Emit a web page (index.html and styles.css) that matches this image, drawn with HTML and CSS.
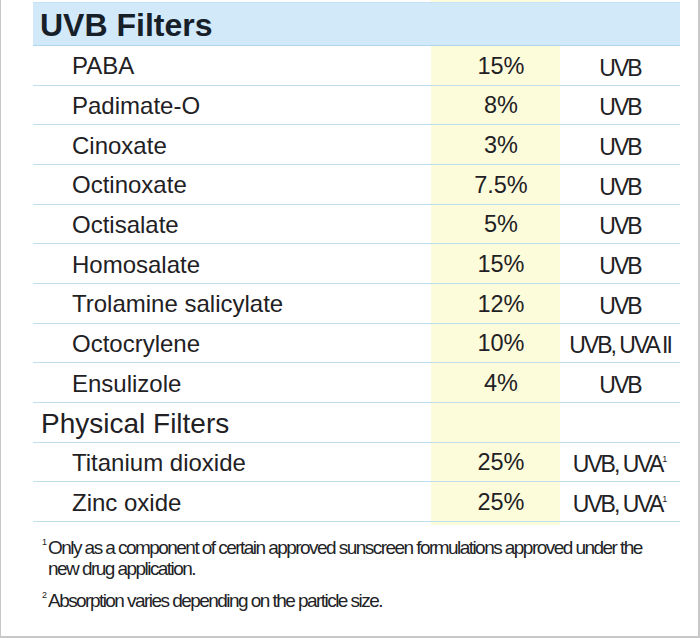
FILE: index.html
```html
<!DOCTYPE html>
<html lang="en">
<head>
<meta charset="utf-8">
<title>UVB Filters</title>
<link rel="stylesheet" href="styles.css">
</head>
<body>
<div class="page">
  <div class="table">
    <div class="row head"><div class="title">UVB Filters</div></div>
    <div class="row"><div class="name">PABA</div><div class="pct">15%</div><div class="uv">UVB</div></div>
    <div class="row"><div class="name">Padimate-O</div><div class="pct">8%</div><div class="uv">UVB</div></div>
    <div class="row"><div class="name">Cinoxate</div><div class="pct">3%</div><div class="uv">UVB</div></div>
    <div class="row"><div class="name">Octinoxate</div><div class="pct">7.5%</div><div class="uv">UVB</div></div>
    <div class="row"><div class="name">Octisalate</div><div class="pct">5%</div><div class="uv">UVB</div></div>
    <div class="row"><div class="name">Homosalate</div><div class="pct">15%</div><div class="uv">UVB</div></div>
    <div class="row"><div class="name">Trolamine salicylate</div><div class="pct">12%</div><div class="uv">UVB</div></div>
    <div class="row"><div class="name">Octocrylene</div><div class="pct">10%</div><div class="uv">UVB, UVA II</div></div>
    <div class="row"><div class="name">Ensulizole</div><div class="pct">4%</div><div class="uv">UVB</div></div>
    <div class="row group"><div class="title">Physical Filters</div></div>
    <div class="row"><div class="name">Titanium dioxide</div><div class="pct">25%</div><div class="uv">UVB, UVA<sup>1</sup></div></div>
    <div class="row"><div class="name">Zinc oxide</div><div class="pct">25%</div><div class="uv">UVB, UVA<sup>1</sup></div></div>
  </div>
  <div class="notes">
    <p><sup>1</sup>Only as a component of certain approved sunscreen formulations approved under the new drug application.</p>
    <p><sup>2</sup>Absorption varies depending on the particle size.</p>
  </div>
</div>
</body>
</html>
```
FILE: styles.css
```css
html, body {
  margin: 0;
  padding: 0;
  background: #ffffff;
}

body {
  font-family: "Liberation Sans", Arial, sans-serif;
  color: #1f2124;
}

.page {
  box-sizing: border-box;
  width: 700px;
  height: 638px;
  border-left: 1px solid #c8c8c8;
  border-right: 2px solid #c8c8c8;
  border-bottom: 2px solid #c8c8c8;
  padding-left: 32px;
  overflow: hidden;
}

.table {
  width: 647px;
  padding-top: 2px;
  padding-bottom: 3px;
  background: linear-gradient(to right,
    transparent 398px, #fcfcdb 398px, #fcfcdb 527px, transparent 527px);
}

.row {
  box-sizing: border-box;
  display: grid;
  grid-template-columns: 398px 129px 120px;
  align-items: center;
  height: 39.67px;
  border-bottom: 1px solid #bfdff1;
}

.row.head {
  height: 44px;
  background: #d1e9f9;
  border-top: 1px solid #c4e2f4;
  border-bottom-color: #add5ee;
}

.title {
  grid-column: 1 / -1;
  padding-left: 7px;
  padding-top: 3px;
}

.head .title {
  font-size: 32px;
  font-weight: bold;
  color: #172029;
}

.group .title {
  font-size: 28px;
  padding-left: 8px;
  padding-top: 4px;
}

.name {
  font-size: 24px;
  padding-left: 39px;
  padding-top: 2px;
}

.pct {
  font-size: 23.5px;
  text-align: center;
  padding-left: 11px;
  padding-top: 2px;
}

.uv {
  font-size: 23px;
  letter-spacing: -2px;
  text-align: center;
  padding-top: 6px;
  white-space: nowrap;
}

.uv sup {
  font-size: 9px;
  letter-spacing: 0;
  vertical-align: 10px;
  line-height: 0;
}

.notes {
  width: 620px;
  padding-top: 12px;
}

.notes p {
  margin: 0 0 11px 0;
  padding-left: 15px;
  text-indent: -6px;
  font-size: 19px;
  line-height: 21px;
  letter-spacing: -1.55px;
  color: #222326;
}

.notes sup {
  font-size: 9px;
  letter-spacing: 0;
  vertical-align: 9px;
  line-height: 0;
  margin-right: 1px;
}
```
